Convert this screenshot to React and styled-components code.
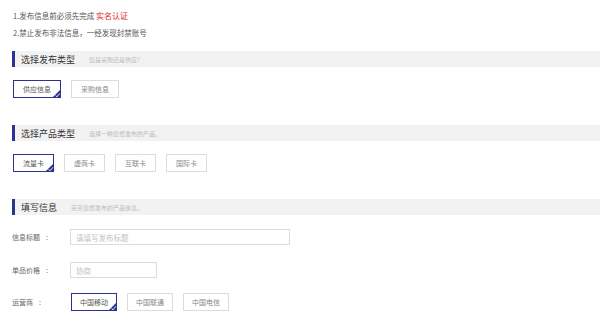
import React from "react";
import styled, { createGlobalStyle } from "styled-components";

const ACCENT = "#2c3192";

const Global = createGlobalStyle`
  html, body { margin: 0; padding: 0; background: #fff; }
  body { font-family: "Noto Sans CJK SC", "Noto Sans", sans-serif; color: #666; }
  * { box-sizing: border-box; }
`;

const Page = styled.div`
  padding: 7px 0 0 12px;
  width: 600px;
`;

const Notice = styled.div`
  font-size: 7.5px;
  line-height: 17px;
  color: #555;
  padding-left: 1px;
`;

const Red = styled.span`
  color: #e2231a;
  font-size: 8px;
`;

const Section = styled.section`
  margin-top: ${(p) => p.$top}px;
`;

const Bar = styled.div`
  display: flex;
  align-items: center;
  height: 16px;
  background: #f3f2f2;
  border-left: 3px solid ${ACCENT};
  padding-left: 6px;
`;

const BarTitle = styled.span`
  font-size: 9px;
  color: #333;
`;

const BarSub = styled.span`
  font-size: 6px;
  color: #bbb;
  margin-left: 14px;
`;

const Options = styled.div`
  display: flex;
  gap: 10px;
  margin-top: ${(p) => p.$top || 0}px;
  padding-left: ${(p) => p.$indent || 0}px;
`;

const Opt = styled.div`
  position: relative;
  height: 18px;
  padding: 0 ${(p) => p.$pad}px;
  display: flex;
  align-items: center;
  font-size: 7px;
  color: ${(p) => (p.$active ? "#555" : "#888")};
  border: 1px solid ${(p) => (p.$active ? ACCENT : "#dcdcdc")};
  background: #fff;
`;

const Corner = styled.svg`
  position: absolute;
  right: -1px;
  bottom: -1px;
  width: 9px;
  height: 9px;
`;

const Form = styled.div`
  margin-top: 14px;
  display: flex;
  flex-direction: column;
`;

const Row = styled.div`
  display: flex;
  align-items: center;
  margin-top: ${(p) => p.$top || 0}px;
`;

const Label = styled.div`
  width: 58px;
  font-size: 7px;
  color: #666;
`;

const Colon = styled.span`
  margin-left: 6px;
`;

const Input = styled.div`
  width: ${(p) => p.$w}px;
  height: 16px;
  border: 1px solid #dcdcdc;
  padding-left: 5px;
  display: flex;
  align-items: center;
  font-size: 7.5px;
  color: #c2c2c2;
`;

function Option({ active, pad = 9, children }) {
  return (
    <Opt $active={active} $pad={pad}>
      {children}
      {active && (
        <Corner viewBox="0 0 9 9">
          <polygon points="9,0 9,9 0,9" fill={ACCENT} />
          <polyline points="3.6,6.6 5,7.8 7.8,4.4" fill="none" stroke="#fff" strokeWidth="0.9" />
        </Corner>
      )}
    </Opt>
  );
}

export default function App() {
  return (
    <>
      <Global />
      <Page>
        <Notice>
          <div>
            1.发布信息前必须先完成 <Red>实名认证</Red>
          </div>
          <div>2.禁止发布非法信息，一经发现封禁账号</div>
        </Notice>

        <Section $top={10}>
          <Bar>
            <BarTitle>选择发布类型</BarTitle>
            <BarSub>您是采购还是供应?</BarSub>
          </Bar>
          <Options $top={13} $indent={1}>
            <Option active>供应信息</Option>
            <Option>采购信息</Option>
          </Options>
        </Section>

        <Section $top={27}>
          <Bar>
            <BarTitle>选择产品类型</BarTitle>
            <BarSub>选择一种您想发布的产品。</BarSub>
          </Bar>
          <Options $top={13} $indent={1}>
            <Option active>流量卡</Option>
            <Option>虚商卡</Option>
            <Option>互联卡</Option>
            <Option>国际卡</Option>
          </Options>
        </Section>

        <Section $top={27}>
          <Bar>
            <BarTitle>填写信息</BarTitle>
            <BarSub>完善您想发布的产品信息。</BarSub>
          </Bar>
          <Form>
            <Row>
              <Label>信息标题<Colon>:</Colon></Label>
              <Input $w={220}>请填写发布标题</Input>
            </Row>
            <Row $top={17}>
              <Label>单品价格<Colon>:</Colon></Label>
              <Input $w={87}>协商</Input>
            </Row>
            <Row $top={15}>
              <Label>运营商<Colon>:</Colon></Label>
              <Options $indent={1}>
                <Option active pad={8}>中国移动</Option>
                <Option pad={8}>中国联通</Option>
                <Option pad={8}>中国电信</Option>
              </Options>
            </Row>
          </Form>
        </Section>
      </Page>
    </>
  );
}
